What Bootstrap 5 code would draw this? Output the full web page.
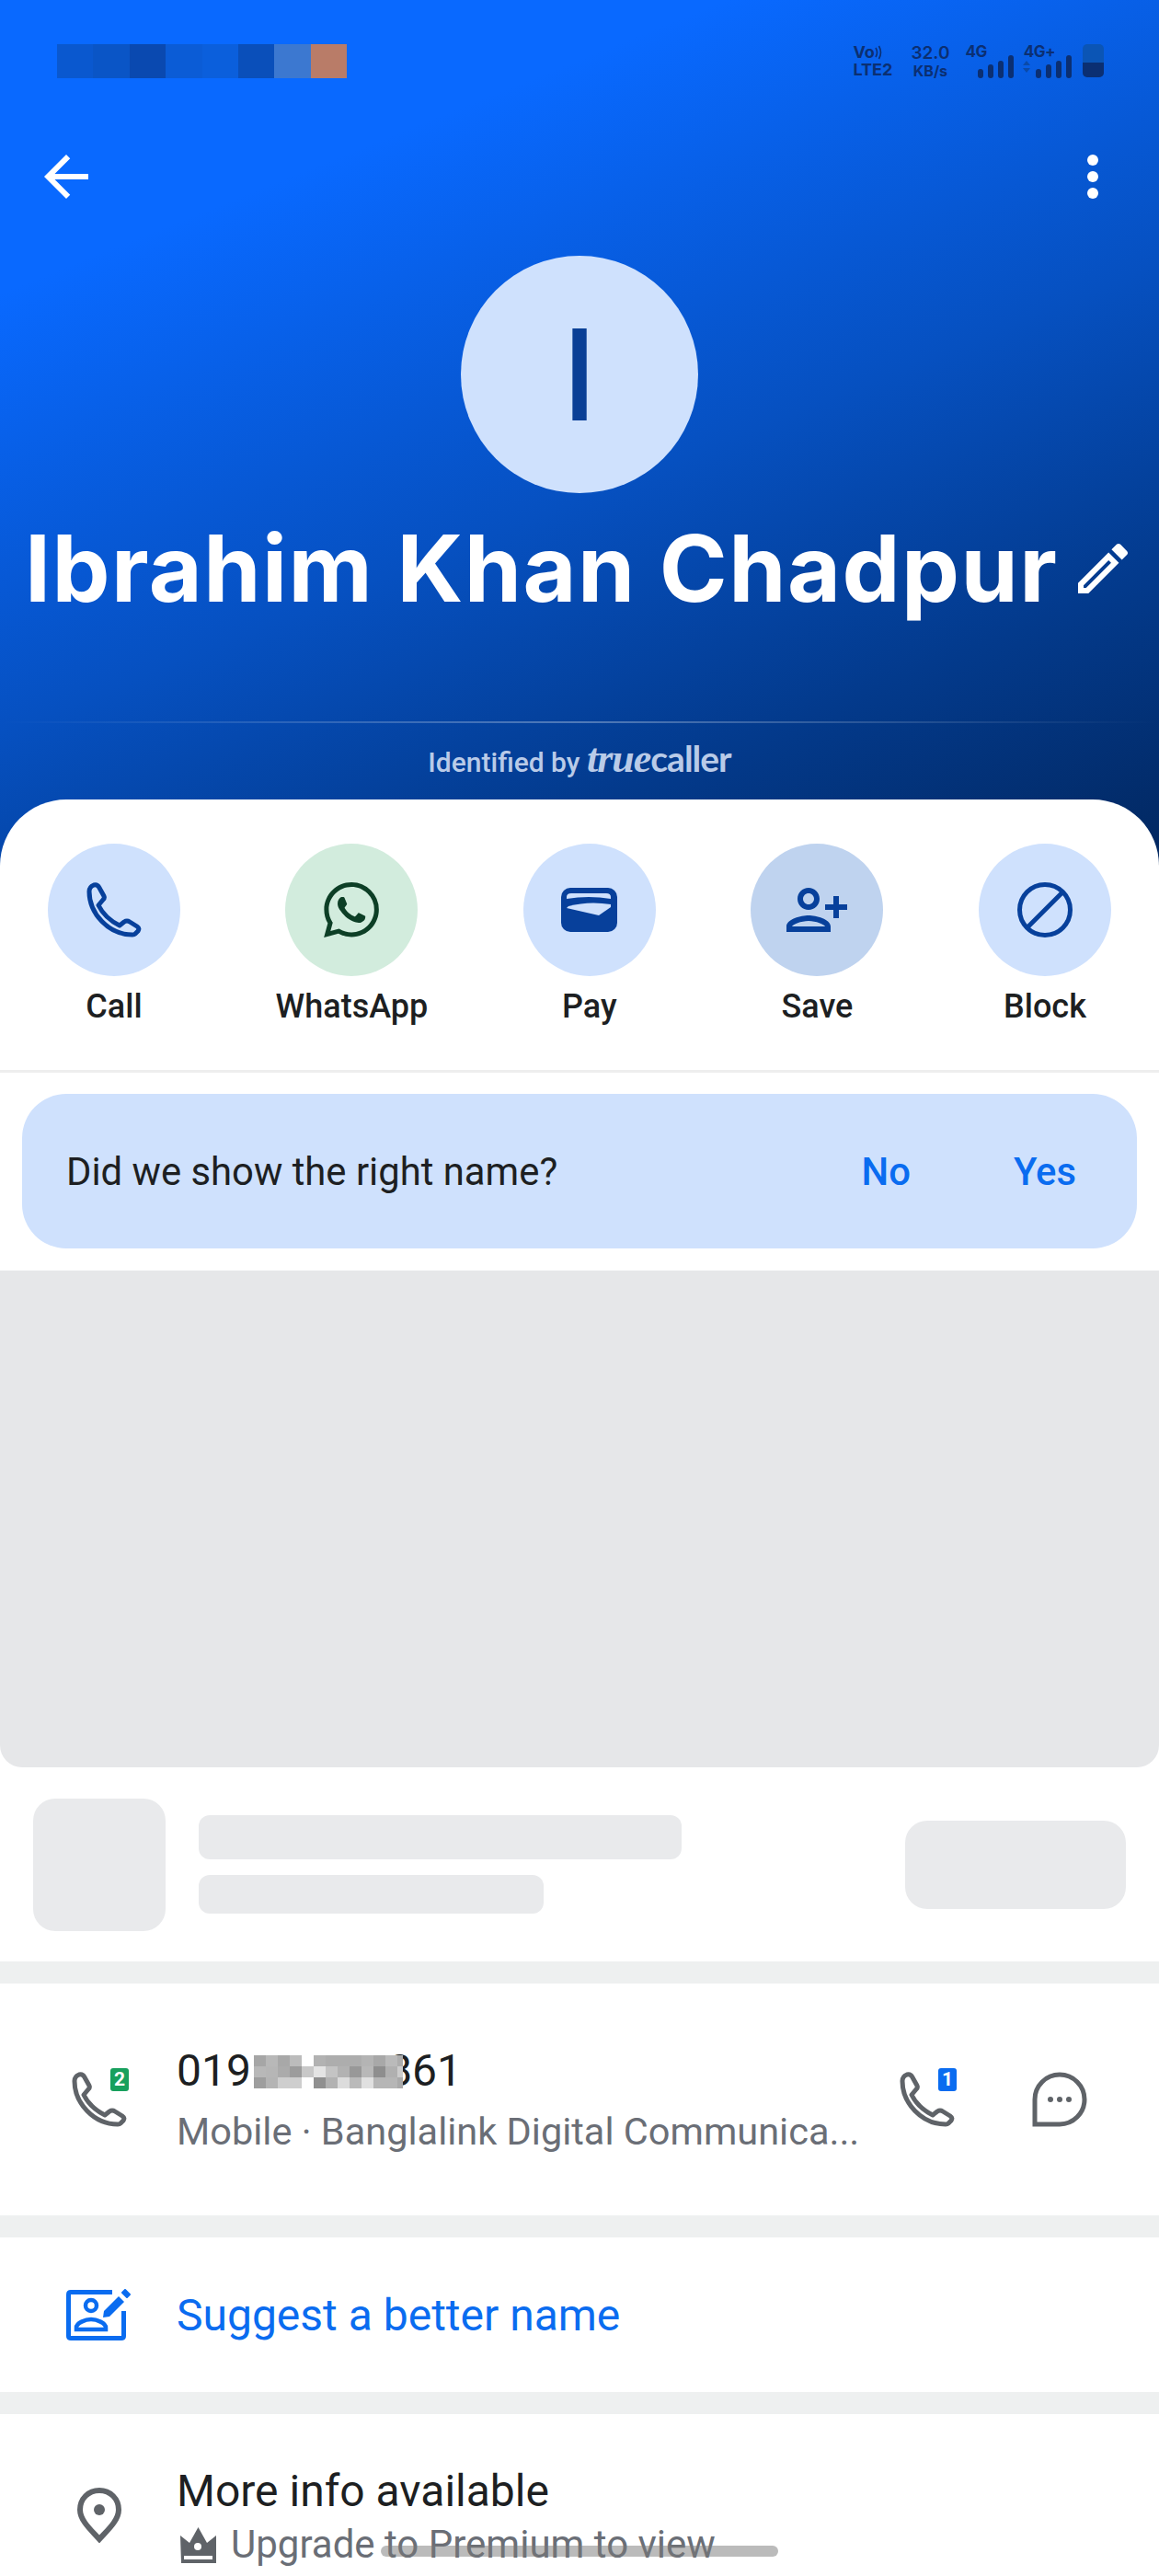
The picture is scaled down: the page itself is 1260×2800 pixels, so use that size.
<!DOCTYPE html>
<html lang="en">
<head>
    <meta charset="UTF-8">
    <meta name="viewport" content="width=device-width, initial-scale=1.0">
    <title>Caller profile</title>
    <link rel="stylesheet" href="https://cdn.jsdelivr.net/npm/bootstrap@5.3.3/dist/css/bootstrap.min.css">
    <style>
        body { width: 1260px; height: 2800px; overflow: hidden; background: #fff; font-family: Roboto, "Liberation Sans", sans-serif; color: #1d1f22; position: relative; }
        svg { display: block; flex-shrink: 0; }

        .hero { height: 941px; padding-top: 48px; background: linear-gradient(158deg, #0969ff 0%, #0969ff 22%, #0650c0 55%, #033a8c 78%, #02275f 100%); }
        .status-row { height: 37px; padding: 0 60px 0 62px; }
        .blur-cell { width: 39.4px; height: 37px; }
        .status-icons { color: #0b2f72; font-family: Inter, sans-serif; font-weight: 700; line-height: 1; height: 37px; }
        .volte { width: 63px; height: 37px; font-size: 18px; }
        .speed { width: 42px; height: 37px; font-size: 19px; font-weight: 600; margin-right: 17px; white-space: nowrap; }
        .speed small { font-size: 16px; font-weight: 700; }
        .sim-wrap { height: 37px; }
        .sim-label { font-size: 17px; align-self: flex-start; letter-spacing: -.5px; }
        .battery { width: 23px; height: 36px; border-radius: 5px; overflow: hidden; background: #0b55b5; margin-left: 12px; }
        .battery span { display: block; height: 16px; margin-top: 20px; background: #0b2f72; }

        .tool-row { margin-top: 71px; height: 72px; padding: 0 66px 0 36px; }
        .more-dots { width: 12px; gap: 6px; }
        .more-dots i { display: block; width: 12px; height: 12px; border-radius: 50%; background: #fff; }

        .avatar { width: 258px; height: 258px; margin-top: 50px; background: #cfe1fd; color: #0a3f96; font-family: Inter, sans-serif; font-size: 138px; font-weight: 500; line-height: 1; }
        .name-row { margin-top: 22px; height: 120px; padding-left: 27px; }
        .name-text { font-family: Inter, sans-serif; font-size: 100px; font-weight: 700; color: #fff; line-height: 120px; white-space: nowrap; letter-spacing: 1.45px; }
        .name-row svg { margin-left: 13px; }
        .hero-line { height: 2px; margin-top: 106px; background: linear-gradient(90deg, rgba(255,255,255,0), rgba(255,255,255,.3) 50%, rgba(255,255,255,0)); }
        .identified { margin-top: 22px; height: 32px; color: #b9cbe8; font-size: 30px; font-weight: 500; line-height: 32px; }
        .tc-true { font-family: "Liberation Serif", serif; font-style: italic; font-weight: 700; font-size: 44px; letter-spacing: -1px; }
        .tc-caller { font-family: Lato, sans-serif; font-weight: 700; font-size: 39px; letter-spacing: -1px; }

        .sheet { margin-top: -72px; background: #fff; border-radius: 72px 72px 0 0; position: relative; }
        .action-row { box-sizing: content-box; height: 246px; padding: 48px 52px 0 52px; border-bottom: 3px solid #eeeeee; }
        .action-item { font-size: 36px; font-weight: 500; line-height: 42px; }
        .action-circle { width: 144px; height: 144px; margin-bottom: 12px; background: #cfe1fd; }
        .circle-green { background: #d2ecdd; }
        .circle-save { background: #bfd3ef; }

        .name-banner { margin: 23px 24px 24px; height: 168px; padding: 2px 66px 0 48px; background: #cfe1fd; border-radius: 48px; font-size: 41.8px; }
        .banner-link { color: #0a6cf0; font-weight: 500; }
        .yes-link { margin-left: 112px; }

        .ad-block { height: 540px; background: #e6e7e9; border-radius: 0 0 24px 24px; }
        .skel-row { height: 211px; padding: 0 36px; gap: 36px; }
        .skel { background: #e9eaec; }
        .skel-thumb { width: 144px; height: 144px; border-radius: 24px; }
        .skel-line-a { width: 525px; height: 48px; border-radius: 12px; }
        .skel-line-b { width: 375px; height: 42px; border-radius: 12px; margin-top: 17px; }
        .skel-btn { width: 240px; height: 96px; border-radius: 24px; }

        .gap-band { height: 24px; background: #eef0f0; }
        .info-row { padding-left: 78px; }
        .info-icon { width: 60px; margin-right: 54px; position: relative; }
        .main-line { font-size: 48px; line-height: 60px; color: #1d1f22; white-space: nowrap; }
        .sub-line { font-size: 41.5px; line-height: 56px; color: #6a6e76; white-space: nowrap; }
        .phone-row .sub-line { margin-top: 8px; }
        .more-row .sub-line { font-size: 42px; }
        .phone-text { padding-top: 2px; }
        .phone-actions { margin-right: 78px; gap: 84px; }
        .mask-strip { display: inline-block; vertical-align: -3px; position: relative; z-index: 1; margin: 0 -17px 0 3px; }
        .sim-badge { position: absolute; top: -4px; right: -2px; width: 20px; height: 25px; border-radius: 3px; color: #fff; font-size: 21px; font-weight: 700; line-height: 25px; text-align: center; }
        .sim-green { background: #17a05d; }
        .sim-blue { background: #0a6cf0; }
        .phone-row { height: 252px; }
        .suggest-row { height: 168px; padding-left: 72px; gap: 48px; }
        .suggest-text { font-size: 48px; color: #0a6cf0; padding-top: 2px; }
        .more-row { height: 176px; padding-top: 54px; }
        .pin-icon { padding: 26px 0 0 6px; }
        .crown { margin-left: 4px; }
        .home-pill { position: absolute; left: 414px; top: 2767px; width: 432px; height: 12px; border-radius: 6px; background: rgba(120,120,120,.5); }
    </style>
</head>
<body>

<header class="hero">
    <div class="status-row d-flex justify-content-between align-items-start">
        <div class="d-flex">
            <span class="blur-cell" style="background:#0a58cf"></span><span class="blur-cell" style="background:#0a55c6"></span><span class="blur-cell" style="background:#0a49b0"></span><span class="blur-cell" style="background:#0b5cd6"></span><span class="blur-cell" style="background:#0b5fdc"></span><span class="blur-cell" style="background:#0a4fba"></span><span class="blur-cell" style="background:#3c78d0"></span><span class="blur-cell" style="background:#b97c68"></span>
        </div>
        <div class="status-icons d-flex align-items-start">
            <div class="volte d-flex flex-column justify-content-between">
                <span class="d-flex align-items-center">Vo<svg width="8" height="16" viewBox="0 0 8 16" fill="none" stroke="#0b2f72" stroke-width="1.6"><path d="M1 3Q4 8 1 13M4.5 1Q8.500 8 4.500 15"/></svg></span>
                <span>LTE2</span>
            </div>
            <div class="speed d-flex flex-column justify-content-between align-items-center"><span>32.0</span><small>KB/s</small></div>
            <div class="sim-wrap d-flex align-items-end">
                <span class="sim-label">4G</span>
                <svg width="39" height="25" viewBox="0 0 39 25" fill="#0b2f72" style="margin-left:-10px"><rect x="0" y="15" width="6" height="10" rx="3"/><rect x="11" y="10" width="6" height="15" rx="3"/><rect x="22" y="6" width="6" height="19" rx="3"/><rect x="33" y="0" width="6" height="25" rx="3"/></svg>
            </div>
            <div class="sim-wrap d-flex align-items-end" style="margin-left:11px">
                <span class="sim-label">4G+</span>
                <svg width="54" height="25" viewBox="0 0 54 25" fill="#0b2f72" style="margin-left:-36px"><path d="M1 11l4-5 4 5zM1 14l4 5 4-5z" fill="#0b4aa8"/><rect x="15" y="15" width="6" height="10" rx="3"/><rect x="26" y="10" width="6" height="15" rx="3"/><rect x="37" y="6" width="6" height="19" rx="3"/><rect x="48" y="0" width="6" height="25" rx="3"/></svg>
            </div>
            <div class="battery"><span></span></div>
        </div>
    </div>

    <div class="tool-row d-flex justify-content-between align-items-center">
        <svg width="72" height="72" viewBox="0 0 24 24" fill="#fff"><path d="M20 11H7.83l5.59-5.59L12 4l-8 8 8 8 1.41-1.41L7.83 13H20v-2z"/></svg>
        <div class="more-dots d-flex flex-column justify-content-center"><i></i><i></i><i></i></div>
    </div>

    <div class="avatar rounded-circle d-flex align-items-center justify-content-center mx-auto">I</div>

    <div class="name-row d-flex align-items-center">
        <span class="name-text">Ibrahim Khan Chadpur</span>
        <svg width="72" height="72" viewBox="0 0 24 24" fill="#fff"><path d="M14.06 9.02l.92.92L5.920 19H5v-.92l9.06-9.06M17.660 3c-.25 0-.51.1-.7.29l-1.83 1.83 3.750 3.750 1.83-1.83c.39-.39.39-1.02 0-1.41l-2.34-2.34c-.2-.2-.45-.29-.71-.29zm-3.6 3.19L3 17.250V21h3.750L17.810 9.940l-3.750-3.750z"/></svg>
    </div>

    <div class="hero-line"></div>
    <div class="identified text-center">Identified by <span class="tc-true">true</span><span class="tc-caller">caller</span></div>
</header>

<main class="sheet">
    <div class="action-row d-flex justify-content-between align-items-start">
        <div class="action-item d-flex flex-column align-items-center">
            <div class="action-circle rounded-circle d-flex align-items-center justify-content-center">
                <svg width="60" height="60" viewBox="0 0 60 60" fill="none" stroke="#07409b" stroke-width="5" stroke-linejoin="round"><path d="M8 3Q12 2 14 6L19 15Q20 17 18 19L13 25C18 35 26 42 36 47L41 43Q44 41 47 43L55 48Q58 50 56 53L53 56Q52 57 50 57C24 57 3 34 3 10Q3 5 8 3Z"/></svg>
            </div>
            <span>Call</span>
        </div>
        <div class="action-item d-flex flex-column align-items-center">
            <div class="action-circle circle-green rounded-circle d-flex align-items-center justify-content-center">
                <svg width="60" height="60" viewBox="0 0 24 24" fill="#0d3f26"><path d="M17.472 14.382c-.297-.149-1.758-.867-2.03-.967-.273-.099-.471-.148-.67.15-.197.297-.767.966-.94 1.164-.173.199-.347.223-.644.075-.297-.15-1.255-.463-2.39-1.475-.883-.788-1.48-1.761-1.653-2.059-.173-.297-.018-.458.13-.606.134-.133.298-.347.446-.52.149-.174.198-.298.298-.497.099-.198.05-.371-.025-.52-.075-.149-.669-1.612-.916-2.207-.242-.579-.487-.5-.669-.51-.173-.008-.371-.01-.57-.01-.198 0-.52.074-.792.372-.272.297-1.04 1.016-1.04 2.479 0 1.462 1.065 2.875 1.213 3.074.149.198 2.096 3.2 5.077 4.487.709.306 1.262.489 1.694.625.712.227 1.36.195 1.871.118.571-.085 1.758-.719 2.006-1.413.248-.694.248-1.289.173-1.413-.074-.124-.272-.198-.57-.347m-5.421 7.403h-.004a9.87 9.87 0 01-5.031-1.378l-.361-.214-3.741.982.998-3.648-.235-.374a9.86 9.86 0 01-1.51-5.26c.001-5.45 4.436-9.884 9.888-9.884 2.64 0 5.122 1.03 6.988 2.898a9.825 9.825 0 012.893 6.994c-.003 5.45-4.437 9.884-9.885 9.884m8.413-18.297A11.815 11.815 0 0012.05 0C5.495 0 .16 5.335.157 11.892c0 2.096.547 4.142 1.588 5.945L.057 24l6.305-1.654a11.882 11.882 0 005.683 1.448h.005c6.554 0 11.89-5.335 11.893-11.893a11.821 11.821 0 00-3.48-8.413z"/></svg>
            </div>
            <span>WhatsApp</span>
        </div>
        <div class="action-item d-flex flex-column align-items-center">
            <div class="action-circle rounded-circle d-flex align-items-center justify-content-center">
                <svg width="61" height="48" viewBox="0 0 61 48"><rect width="61" height="48" rx="10" fill="#07409b"/><path d="M6 12V10Q6 6 11 6H49Q54 6 54 10V12Q30 8 6 12Z" fill="#cfe1fd"/><path d="M6 22L8 20Q30 14 54 18V21L41 30Z" fill="#cfe1fd"/></svg>
            </div>
            <span>Pay</span>
        </div>
        <div class="action-item d-flex flex-column align-items-center">
            <div class="action-circle circle-save rounded-circle d-flex align-items-center justify-content-center">
                <svg width="72" height="72" viewBox="0 0 24 24" fill="#07409b"><path transform="translate(24 0) scale(-1 1)" d="M15 12c2.21 0 4-1.79 4-4s-1.79-4-4-4-4 1.79-4 4 1.79 4 4 4zm0-6c1.1 0 2 .9 2 2s-.9 2-2 2-2-.9-2-2 .9-2 2-2zm0 8c-2.67 0-8 1.34-8 4v2h16v-2c0-2.66-5.33-4-8-4zm-6 4c.22-.72 3.31-2 6-2 2.7 0 5.8 1.29 6 2H9zm-3-3v-3h3v-2H6V7H4v3H1v2h3v3z"/></svg>
            </div>
            <span>Save</span>
        </div>
        <div class="action-item d-flex flex-column align-items-center">
            <div class="action-circle rounded-circle d-flex align-items-center justify-content-center">
                <svg width="60" height="60" viewBox="0 0 60 60" fill="none" stroke="#07409b" stroke-width="5"><circle cx="30" cy="30" r="27.5"/><path d="M49 11L11 49"/></svg>
            </div>
            <span>Block</span>
        </div>
    </div>

    <div class="name-banner d-flex align-items-center">
        <span class="flex-grow-1">Did we show the right name?</span>
        <span class="banner-link">No</span>
        <span class="banner-link yes-link">Yes</span>
    </div>

    <div class="ad-block"></div>

    <div class="skel-row d-flex align-items-center">
        <div class="skel skel-thumb"></div>
        <div>
            <div class="skel skel-line-a"></div>
            <div class="skel skel-line-b"></div>
        </div>
        <div class="skel skel-btn ms-auto"></div>
    </div>

    <div class="gap-band"></div>

    <div class="info-row phone-row d-flex align-items-center">
        <div class="info-icon">
            <svg width="60" height="60" viewBox="0 0 60 60" fill="none" stroke="#5f6368" stroke-width="5" stroke-linejoin="round"><path d="M8 3Q12 2 14 6L19 15Q20 17 18 19L13 25C18 35 26 42 36 47L41 43Q44 41 47 43L55 48Q58 50 56 53L53 56Q52 57 50 57C24 57 3 34 3 10Q3 5 8 3Z"/></svg>
            <span class="sim-badge sim-green">2</span>
        </div>
        <div class="phone-text flex-grow-1">
            <div class="main-line">019<svg class="mask-strip" width="162" height="36" viewBox="0 0 162 36" shape-rendering="crispEdges"><rect x="0" y="0" width="13" height="12" fill="#a6a6a6"/><rect x="13" y="0" width="13" height="12" fill="#b8b8b8"/><rect x="26" y="0" width="13" height="12" fill="#a8a8a8"/><rect x="39" y="0" width="13" height="12" fill="#bcbcbc"/><rect x="52" y="0" width="13" height="12" fill="#ffffff"/><rect x="65" y="0" width="13" height="12" fill="#b2b2b2"/><rect x="78" y="0" width="13" height="12" fill="#adadad"/><rect x="91" y="0" width="13" height="12" fill="#adadad"/><rect x="104" y="0" width="13" height="12" fill="#adadad"/><rect x="117" y="0" width="13" height="12" fill="#b4b4b4"/><rect x="130" y="0" width="13" height="12" fill="#a8a8a8"/><rect x="143" y="0" width="13" height="12" fill="#bababa"/><rect x="156" y="0" width="6" height="12" fill="#adadad"/><rect x="0" y="12" width="13" height="12" fill="#b8b8b8"/><rect x="13" y="12" width="13" height="12" fill="#b6b6b6"/><rect x="26" y="12" width="13" height="12" fill="#ababab"/><rect x="39" y="12" width="13" height="12" fill="#9c9c9c"/><rect x="52" y="12" width="13" height="12" fill="#c8c8c8"/><rect x="65" y="12" width="13" height="12" fill="#e4e4e4"/><rect x="78" y="12" width="13" height="12" fill="#c4c4c4"/><rect x="91" y="12" width="13" height="12" fill="#b2b2b2"/><rect x="104" y="12" width="13" height="12" fill="#989898"/><rect x="117" y="12" width="13" height="12" fill="#b8b8b8"/><rect x="130" y="12" width="13" height="12" fill="#8e8e8e"/><rect x="143" y="12" width="13" height="12" fill="#b0b0b0"/><rect x="156" y="12" width="6" height="12" fill="#cccccc"/><rect x="0" y="24" width="13" height="12" fill="#9e9e9e"/><rect x="13" y="24" width="13" height="12" fill="#b4b4b4"/><rect x="26" y="24" width="13" height="12" fill="#cecece"/><rect x="39" y="24" width="13" height="12" fill="#cecece"/><rect x="52" y="24" width="13" height="12" fill="#ffffff"/><rect x="65" y="24" width="13" height="12" fill="#909090"/><rect x="78" y="24" width="13" height="12" fill="#b2b2b2"/><rect x="91" y="24" width="13" height="12" fill="#dcdcdc"/><rect x="104" y="24" width="13" height="12" fill="#bababa"/><rect x="117" y="24" width="13" height="12" fill="#e0e0e0"/><rect x="130" y="24" width="13" height="12" fill="#b6b6b6"/><rect x="143" y="24" width="13" height="12" fill="#b6b6b6"/><rect x="156" y="24" width="6" height="12" fill="#aaaaaa"/></svg>861</div>
            <div class="sub-line">Mobile · Banglalink Digital Communica...</div>
        </div>
        <div class="phone-actions d-flex align-items-center">
            <div class="position-relative">
                <svg width="60" height="60" viewBox="0 0 60 60" fill="none" stroke="#5f6368" stroke-width="5" stroke-linejoin="round"><path d="M8 3Q12 2 14 6L19 15Q20 17 18 19L13 25C18 35 26 42 36 47L41 43Q44 41 47 43L55 48Q58 50 56 53L53 56Q52 57 50 57C24 57 3 34 3 10Q3 5 8 3Z"/></svg>
                <span class="sim-badge sim-blue">1</span>
            </div>
            <svg width="60" height="60" viewBox="0 0 60 60"><path d="M30 3A27 27 0 1 1 30 57H3V30A27 27 0 0 1 30 3Z" fill="none" stroke="#5f6368" stroke-width="5"/><circle cx="20" cy="30" r="3" fill="#5f6368"/><circle cx="30" cy="30" r="3" fill="#5f6368"/><circle cx="40" cy="30" r="3" fill="#5f6368"/></svg>
        </div>
    </div>

    <div class="gap-band"></div>

    <div class="suggest-row d-flex align-items-center">
        <svg width="72" height="56" viewBox="0 0 72 56"><path d="M50 3.500H5Q2.500 3.500 2.500 6V51Q2.500 53.500 5 53.500H60Q62.500 53.500 62.500 51V24" fill="none" stroke="#0a6cf0" stroke-width="5"/><path d="M40 31L41 24L57 8L63 14L47 30Z" fill="#0a6cf0"/><path d="M61 4L64 1L69 6L66 9Z" fill="#0a6cf0" stroke="#0a6cf0" stroke-width="2" stroke-linejoin="round"/><circle cx="27" cy="18" r="6" fill="none" stroke="#0a6cf0" stroke-width="4.500"/><path d="M11 44V42C11 37 21 33 27 33C33 33 43 37 43 42V44Z" fill="none" stroke="#0a6cf0" stroke-width="4.500"/></svg>
        <span class="suggest-text">Suggest a better name</span>
    </div>

    <div class="gap-band"></div>

    <div class="info-row more-row d-flex align-items-start">
        <div class="info-icon pin-icon">
            <svg width="48" height="60" viewBox="0 0 48 60"><path d="M24 3C12 3 3 12 3 24C3 36 16 47 24 56C32 47 45 36 45 24C45 12 36 3 24 3Z" fill="none" stroke="#5f6368" stroke-width="6"/><circle cx="24" cy="24" r="6" fill="#5f6368"/></svg>
        </div>
        <div>
            <div class="main-line">More info available</div>
            <div class="sub-line d-flex align-items-center gap-3">
                <svg class="crown" width="39" height="39" viewBox="0 0 39 39"><path d="M0 9L10 17L19.500 0L29 17L39 9V39H1Z" fill="#5f6368"/><circle cx="19" cy="21" r="4" fill="#fff"/><rect x="4" y="31" width="31" height="4" fill="#fff"/></svg>
                <span>Upgrade to Premium to view</span>
            </div>
        </div>
    </div>
</main>

<div class="home-pill"></div>

</body>
</html>
